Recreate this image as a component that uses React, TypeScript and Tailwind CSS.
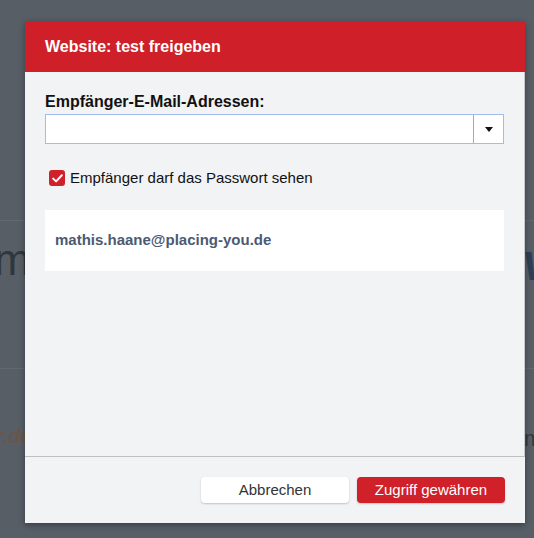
import React from "react";

export default function App() {
  const font = { fontFamily: '"Liberation Sans", Arial, Helvetica, sans-serif' };
  return (
    <div className="relative w-[534px] h-[538px] overflow-hidden bg-[#575e66]" style={font}>
      {/* page behind the overlay */}
      <div className="absolute left-0 right-0 top-[220px] h-px bg-[#61686f]" />
      <div className="absolute left-0 right-0 top-[368px] h-px bg-[#61686f]" />
      <div className="absolute left-[-6px] top-[238px] text-[44px] leading-none text-[#30363d]">m</div>
      <div className="absolute left-[522px] top-[246px] text-[40px] leading-none font-bold italic text-[#2e3f55]">V</div>
      <div className="absolute left-[-4px] top-[426px] text-[20px] leading-none font-bold italic text-[#6a5648]">r.de</div>
      <div className="absolute left-[524px] top-[428px] text-[22px] leading-none text-[#33393f]">m</div>

      {/* dialog */}
      <div className="absolute left-[25px] top-[21px] w-[500px] h-[502px] flex flex-col bg-[#f2f3f5] shadow-[0_2px_6px_rgba(0,0,0,0.35)]">
        <div className="h-[51px] shrink-0 bg-[#cf2029] flex items-center px-[20px]">
          <span className="text-white font-bold text-[16px]">Website: test freigeben</span>
        </div>
        <div className="flex-1 flex flex-col px-[20px] pt-[20px] border-r border-[#c9cacc]">
          <div className="text-[16px] leading-[20px] font-bold text-[#111]">Empfänger-E-Mail-Adressen:</div>
          <div className="mt-[2px] h-[30px] flex bg-white border border-[#9ebde8]">
            <div className="flex-1" />
            <div className="w-px bg-[#a9a9a9]" />
            <div className="w-[29px] flex items-center justify-center">
              <svg width="8" height="5" viewBox="0 0 8 5">
                <path d="M0 0 L8 0 L4 5 Z" fill="#111" />
              </svg>
            </div>
          </div>
          <div className="mt-[25px] h-[18px] flex items-center gap-[5px] pl-[4px]">
            <div className="w-[16px] h-[16px] rounded-[3px] bg-[#d0212b] flex items-center justify-center">
              <svg width="11" height="9" viewBox="0 0 11 9">
                <path d="M1.2 4.6 L4.1 7.4 L9.8 1.3" stroke="white" strokeWidth="2" fill="none" strokeLinecap="round" strokeLinejoin="round" />
              </svg>
            </div>
            <span className="text-[15px] leading-[18px] text-[#111]">Empfänger darf das Passwort sehen</span>
          </div>
          <div className="mt-[23px] h-[61px] bg-white flex items-center pl-[10px]">
            <span className="text-[15px] font-bold text-[#4b5a73]">mathis.haane@placing-you.de</span>
          </div>
        </div>
        <div className="h-px bg-[#bfc0c2]" />
        <div className="h-[66px] shrink-0 flex items-start justify-end gap-[8px] pt-[20px] pr-[20px]">
          <button className="w-[148px] h-[26px] rounded-[4px] bg-white shadow-[0_1px_2px_rgba(0,0,0,0.2)] text-[15px] text-[#333]">Abbrechen</button>
          <button className="w-[148px] h-[26px] rounded-[4px] bg-[#d0202a] shadow-[0_1px_2px_rgba(0,0,0,0.2)] text-[15px] text-white">Zugriff gewähren</button>
        </div>
      </div>
    </div>
  );
}
